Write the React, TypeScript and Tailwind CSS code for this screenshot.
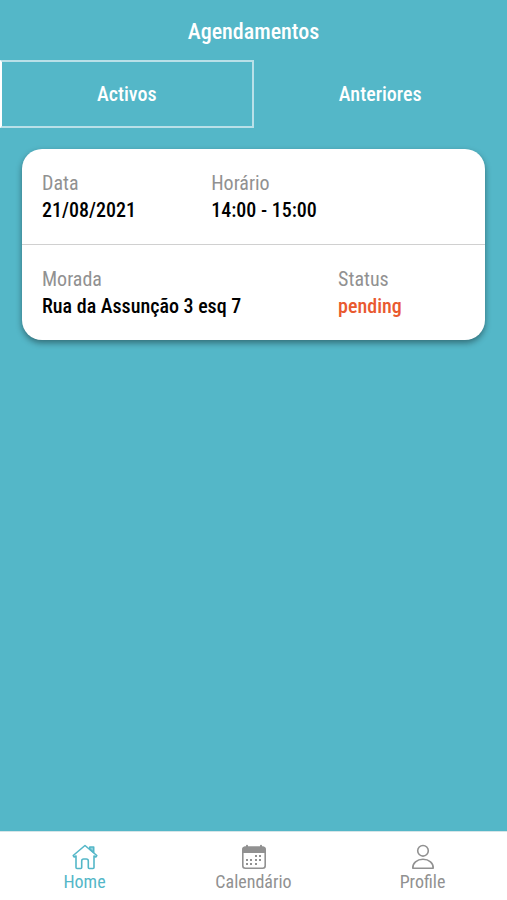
import { useState } from 'react'
import type { ReactNode } from 'react'
import { clsx } from 'clsx'

interface FieldProps {
  label: string
  value: string
  className?: string
  valueClassName?: string
}

function Field({ label, value, className, valueClassName = 'text-black' }: FieldProps) {
  return (
    <div className={className}>
      <dt className="text-[20px] leading-[27px] text-[#919191]">{label}</dt>
      <dd className={clsx('text-[20px] leading-[27px] font-medium', valueClassName)}>{value}</dd>
    </div>
  )
}

function HomeIcon() {
  return (
    <svg width="26" height="26" viewBox="0 0 26 26" fill="none" stroke="currentColor" strokeWidth="1.6" strokeLinejoin="round" strokeLinecap="round" aria-hidden="true">
      <path d="M13 1.500 1.200 11.500l1 1.500 1.800-1v11.500a1 1 0 0 0 1 1h3.700a1 1 0 0 0 1-1v-6.500a2 2 0 0 1 2-2h2.600a2 2 0 0 1 2 2v6.500a1 1 0 0 0 1 1H21a1 1 0 0 0 1-1V12l1.800 1 1-1.500z" />
      <path d="M17.800 3h3.900v5.500l-3.900-3.300z" fill="currentColor" fillOpacity="0.6" />
    </svg>
  )
}

function CalendarIcon() {
  return (
    <svg width="26" height="26" viewBox="0 0 26 26" fill="none" aria-hidden="true">
      <path d="M1.500 9V5a2.500 2.500 0 0 1 2.500-2.500h18A2.500 2.500 0 0 1 24.500 5v4z" fill="currentColor" />
      <rect x="1.800" y="3.300" width="22.400" height="21" rx="2.500" stroke="currentColor" strokeWidth="1.600" />
      <path d="M6 1.800v2M20 1.800v2" stroke="currentColor" strokeWidth="2" strokeLinecap="round" />
      <path
        d="M14 11h2v2h-2zM18 11h2v2h-2zM5 15h2v2H5zM9 15h2v2H9zM14 15h2v2h-2zM18 15h2v2h-2zM5 19h2v2H5zM9 19h2v2H9zM14 19h2v2h-2z"
        fill="currentColor"
      />
    </svg>
  )
}

function ProfileIcon() {
  return (
    <svg width="24" height="26" viewBox="0 0 24 26" fill="none" stroke="currentColor" strokeWidth="1.600" strokeLinejoin="round" aria-hidden="true">
      <circle cx="12" cy="6.800" r="5.300" />
      <path d="M1.800 24.300c-.4-5.200 4.200-9 10.200-9s10.600 3.800 10.200 9z" />
    </svg>
  )
}

const NAV_ITEMS: { label: string; icon: ReactNode; active?: boolean }[] = [
  { label: 'Home', icon: <HomeIcon />, active: true },
  { label: 'Calendário', icon: <CalendarIcon /> },
  { label: 'Profile', icon: <ProfileIcon /> },
]

const TABS = ['Activos', 'Anteriores']

export default function App() {
  const [tab, setTab] = useState('Activos')

  return (
    <div className="flex min-h-screen flex-col bg-[#54b7c8] font-['Roboto_Condensed','Liberation_Sans_Narrow','Roboto',sans-serif]">
      <header className="flex h-15 items-center justify-center pt-1">
        <h1 className="text-[22px] leading-6 font-medium text-white">Agendamentos</h1>
      </header>

      <div role="tablist" className="grid grid-cols-2">
        {TABS.map((name) => (
          <button
            key={name}
            type="button"
            role="tab"
            aria-selected={tab === name}
            onClick={() => setTab(name)}
            className={clsx(
              'h-17 border-2 text-[20px] font-medium text-white',
              tab === name ? 'border-[#b9e0e8] border-l-white' : 'border-transparent'
            )}
          >
            {name}
          </button>
        ))}
      </div>

      <main className="flex-1 px-[22px] pt-[21px]">
        <dl className="rounded-[20px] bg-white shadow-[0_3px_6px_rgba(0,0,0,0.4)]">
          <div className="flex border-b border-[#d0d0d0] px-5 pt-[21px] pb-5">
            <Field label="Data" value="21/08/2021" className="w-2/5" />
            <Field label="Horário" value="14:00 - 15:00" />
          </div>
          <div className="flex px-5 pt-[21px] pb-5">
            <Field label="Morada" value="Rua da Assunção 3 esq 7" className="w-7/10" />
            <Field label="Status" value="pending" valueClassName="text-[#e9592f]" />
          </div>
        </dl>
      </main>

      <nav className="grid grid-cols-3 border-t border-[#d5e5e8] bg-white pt-3 pb-1.5">
        {NAV_ITEMS.map(({ label, icon, active }) => (
          <a
            key={label}
            href="#"
            className={clsx('flex flex-col items-center', active ? 'text-[#54b7c8]' : 'text-[#919191]')}
          >
            {icon}
            <span className="text-[18px] leading-6">{label}</span>
          </a>
        ))}
      </nav>
    </div>
  )
}
